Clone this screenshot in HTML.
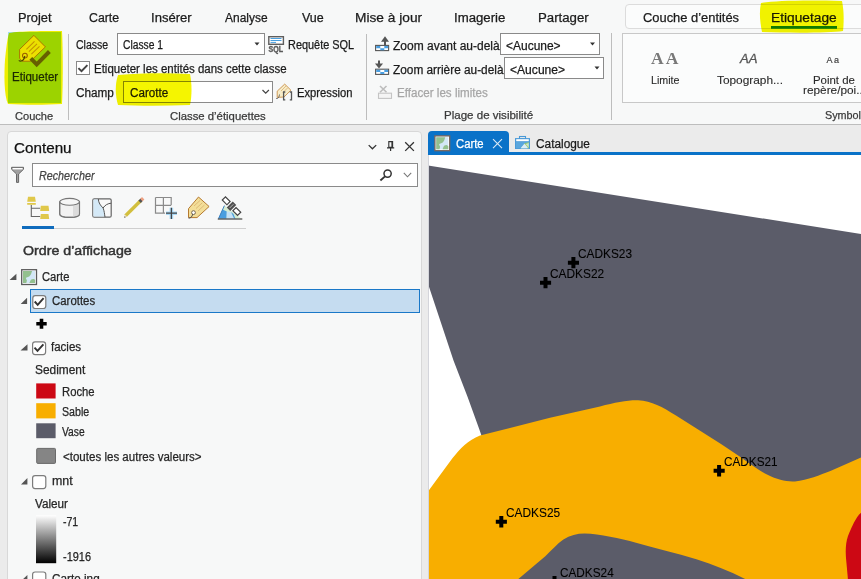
<!DOCTYPE html>
<html><head><meta charset="utf-8">
<style>
html,body{margin:0;padding:0}
body{width:861px;height:579px;overflow:hidden;position:relative;background:#ebebeb;font-family:"Liberation Sans",sans-serif}
.a{position:absolute;box-sizing:border-box}
.t{position:absolute;white-space:nowrap;line-height:1;transform-origin:0 0;-webkit-text-stroke:0.25px currentColor}
svg{position:absolute;overflow:visible}
</style></head><body>
<!-- ribbon -->
<div class="a" style="left:0;top:0;width:861px;height:124px;background:#f7f8f8"></div>
<div class="a" style="left:0;top:124px;width:861px;height:1px;background:#bdbdbd"></div>
<!-- contextual tab box -->
<div class="a" style="left:625px;top:4px;width:260px;height:25px;background:#fbfcfc;border:1px solid #dcdcdc;border-radius:4px"></div>
<!-- separators -->
<div class="a" style="left:68px;top:34px;width:1px;height:86px;background:#bdbdbd"></div>
<div class="a" style="left:366px;top:34px;width:1px;height:86px;background:#bdbdbd"></div>
<div class="a" style="left:611px;top:33px;width:1px;height:87px;background:#bdbdbd"></div>
<!-- combos -->
<div class="a" style="left:117px;top:33px;width:148px;height:22px;background:#fff;border:1px solid #8a8a8a"></div>
<div class="a" style="left:76px;top:61px;width:14px;height:14px;background:#fff;border:1px solid #8a8a8a"></div>
<div class="a" style="left:123px;top:81px;width:150px;height:22px;border:1px solid #8a8a8a;background:#fff"></div>
<div class="a" style="left:500px;top:33px;width:100px;height:22px;background:#fff;border:1px solid #8a8a8a"></div>
<div class="a" style="left:504px;top:57px;width:100px;height:22px;background:#fff;border:1px solid #8a8a8a"></div>
<!-- gallery -->
<div class="a" style="left:622px;top:33px;width:260px;height:70px;background:#fbfcfc;border:1px solid #c8c8c8"></div>

<!-- ribbon svg layer -->
<svg style="left:0;top:0" width="861" height="125" viewBox="0 0 861 125">
 <!-- highlighter Etiquetage -->
 <rect x="771" y="26" width="66" height="2.8" fill="#1080d0"/>
 <!-- Etiqueter button -->
 <rect x="8" y="32" width="53" height="71" fill="#a2dcf4"/>
 <path d="M33.9 35.4 L45.4 46.9 L30.5 61.2 L22.1 61.2 L19.6 58.3 L19.6 49.4 Z" fill="#f5ea00" stroke="#b07000" stroke-width="0.9" stroke-linejoin="round"/>
 <path d="M26.4 49.4 L34.5 41.3 M28.9 51.6 L37 43.8 M31.4 54.1 L39.5 46.3" stroke="#cc9a00" stroke-width="1.1"/>
 <circle cx="24.9" cy="55.6" r="2.4" fill="#f5ea00" stroke="#a06000" stroke-width="1.1"/>
 <path d="M24.9 56 C24.3 58.5 23.5 60.2 22 60.8 C20.8 61.3 19.6 61.2 18.8 60.3" fill="none" stroke="#4a4a10" stroke-width="1.1"/>
 <path d="M30.8 58.4 L36.7 64.3 L49.4 51.5" fill="none" stroke="#6b6400" stroke-width="4"/>
 <!-- combo arrows -->
 <path d="M254.5 42.5 L259.5 42.5 L257 45.5 Z M590 42.5 L595 42.5 L592.5 45.5 Z M594.5 66.5 L599.5 66.5 L597 69.5 Z" fill="#333"/>
 <path d="M262.5 90 L265.7 93.2 L268.9 90" fill="none" stroke="#444" stroke-width="1.2"/>
 <!-- checkbox check -->
 <path d="M78.4 68.1 L81.5 71.1 L87.4 65.1" fill="none" stroke="#444" stroke-width="2"/>
 <!-- SQL icon -->
 <rect x="268.8" y="36.7" width="14.6" height="7.6" fill="#fff" stroke="#5e5e5e" stroke-width="1.4"/>
 <path d="M270.5 38.5 H281.5 M270.5 40.5 H281.5 M270.5 42.4 H276" stroke="#4aa0e0" stroke-width="1"/>
 <text x="268.6" y="51.8" font-family="Liberation Sans" font-weight="bold" font-size="8.4" fill="#5a5a5a" stroke="#5a5a5a" stroke-width="0.35" textLength="14.6" lengthAdjust="spacingAndGlyphs">SQL</text>
 <!-- expression icon -->
 <path d="M284.7 84.1 L290.9 90.2 L284 97 L277.2 97.4 L277.2 91.2 Z" fill="#f7ecc8" stroke="#c8904a" stroke-width="0.9"/>
 <path d="M281 91 L286 86 M282.5 93 L287.5 88" stroke="#d8b070" stroke-width="0.8"/>
 <path d="M285.3 92 H283.6 V99.8 H285.3 M289.8 92 H291.5 V99.8 H289.8" fill="none" stroke="#555" stroke-width="1.3"/>
 <path d="M279.5 94.5 C279 98 277.5 99 276 98.3" fill="none" stroke="#555" stroke-width="0.9"/>
 <!-- zoom in icon -->
 <rect x="375.6" y="45.4" width="13" height="5.2" fill="#fff" stroke="#555" stroke-width="1.1"/>
 <path d="M376.2 46 h4.1 v2.2 h-4.1 Z M384.3 46 h3.8 v2.2 h-3.8 Z M380.3 48.2 h4 v2.1 h-4 Z" fill="#4a9ee0"/>
 <path d="M385 45.2 V40" stroke="#555" stroke-width="2"/>
 <path d="M381 41.8 L385 36.3 L389 41.8 Z" fill="#555"/>
 <!-- zoom out icon -->
 <rect x="375.6" y="69.2" width="13" height="5.2" fill="#fff" stroke="#555" stroke-width="1.1"/>
 <path d="M376.2 69.8 h4.1 v2.2 h-4.1 Z M384.3 69.8 h3.8 v2.2 h-3.8 Z M380.3 72 h4 v2.1 h-4 Z" fill="#4a9ee0"/>
 <path d="M379 60.4 V65" stroke="#555" stroke-width="2"/>
 <path d="M375 63.6 L379 68.6 L383 63.6 Z" fill="#555"/>
 <!-- effacer icon -->
 <rect x="378.5" y="93.2" width="13" height="5.2" fill="#f4f4f4" stroke="#c4c4c4" stroke-width="1.1"/>
 <path d="M380 86 L386.5 92.3 M386.5 86 L380 92.3" stroke="#bdbdbd" stroke-width="1.6"/>
 <!-- gallery glyphs -->
 <text x="651" y="63.8" font-family="Liberation Serif" font-weight="bold" font-size="17.5" fill="#787878" textLength="27.5" lengthAdjust="spacing">AA</text>
 <text x="740" y="63.4" font-family="Liberation Sans" font-style="italic" font-size="12.2" fill="#555" stroke="#555" stroke-width="0.3" textLength="17.5" lengthAdjust="spacingAndGlyphs">AA</text>
 <text x="826.6" y="63.2" font-family="Liberation Sans" font-size="9" fill="#444" stroke="#444" stroke-width="0.2" textLength="12.5" lengthAdjust="spacing">Aa</text>
</svg>

<!-- contents panel -->
<div class="a" style="left:7px;top:131px;width:415px;height:460px;background:#f7f8f8;border:1px solid #d8d8d8;border-radius:4px"></div>
<div class="a" style="left:32px;top:163px;width:386px;height:24px;background:#fff;border:1px solid #8a8a8a"></div>
<div class="a" style="left:22px;top:226px;width:32px;height:3px;background:#0f6cbd"></div>
<div class="a" style="left:54px;top:228px;width:192px;height:1px;background:#cfcfcf"></div>
<!-- selection -->
<div class="a" style="left:30px;top:289px;width:390px;height:24px;background:#c5dcf0;border:1px solid #1a78c8"></div>

<svg style="left:0;top:125px" width="428" height="454" viewBox="0 125 428 454">
 <!-- header icons -->
 <path d="M368.7 145.1 L372.4 148.8 L376.2 145.1" fill="none" stroke="#333" stroke-width="1.3"/>
 <path d="M388.8 141.6 H392.6 V147.4 H388.8 Z" fill="none" stroke="#333" stroke-width="1.1"/>
 <rect x="391.4" y="141.6" width="1.6" height="5.8" fill="#333"/>
 <path d="M387 147.8 H394.2 M390.6 147.8 V151" stroke="#333" stroke-width="1.2"/>
 <path d="M405.2 142.2 L413.9 150.9 M413.9 142.2 L405.2 150.9" stroke="#333" stroke-width="1.3"/>
 <!-- filter -->
 <path d="M11.6 167.3 H23.5 V169.3 L18.6 174 V182.4 H16.5 V174 L11.6 169.3 Z" fill="#a0a0a0" stroke="#666" stroke-width="1"/>
 <rect x="12.6" y="168" width="10" height="1.4" fill="#fff"/>
 <!-- search -->
 <circle cx="387.6" cy="173.6" r="3.6" fill="none" stroke="#333" stroke-width="1.5"/>
 <path d="M385 176.3 L380.4 180.5" stroke="#333" stroke-width="1.8"/>
 <path d="M403.8 172.8 L407.5 176.8 L411.2 172.8" fill="none" stroke="#777" stroke-width="1.1"/>
 <!-- tab icon 1 drawing order -->
 <path d="M28 196.8 H35 L35.8 201.7 H27.2 Z M27.2 203 H35.8 V204.8 H27.2 Z" fill="#e0c84a"/>
 <path d="M31.3 205 V216.5 H40.2 M31.3 208.2 H40.2" fill="none" stroke="#666" stroke-width="1.1"/>
 <path d="M40.8 205.8 H48.5 L49.2 211 H40.2 Z M40.8 214 H48.5 L49.2 218.9 H40.2 Z" fill="#e0c84a"/>
 <!-- tab icon 2 cylinder -->
 <path d="M59.7 201.5 V214 C59.7 218.5 79.5 218.5 79.5 214 V201.5" fill="#f2f2f2" stroke="#777" stroke-width="1.1"/>
 <path d="M73 206 V217 C76 216.5 79.5 215.5 79.5 214 V202 C78 204 76 205.5 73 206 Z" fill="#dcdcdc"/>
 <ellipse cx="69.6" cy="201.8" rx="9.9" ry="3.4" fill="#f6f6f6" stroke="#777" stroke-width="1.1"/>
 <path d="M59.7 201.5 V214 C59.7 218.5 79.5 218.5 79.5 214 V201.5" fill="none" stroke="#777" stroke-width="1.1"/>
 <!-- tab icon 3 -->
 <rect x="92.8" y="198.8" width="18.4" height="18.4" rx="1.5" fill="#f8f8f8" stroke="#666" stroke-width="1.2"/>
 <path d="M93.4 199.4 H98.3 C98.6 203 100.5 205.5 103.1 208 C104.3 211 104.5 214 105 216.6 H93.4 Z" fill="#d4e9f7"/>
 <path d="M98.3 199 C98.6 203 100.5 205.5 103.1 208 C104.3 211 104.5 214 105 217.2 M103.1 208 C105 205 108 203.4 111.2 203.2" fill="none" stroke="#555" stroke-width="1"/>
 <!-- pencil -->
 <path d="M125.5 215.8 L140.6 200.8" stroke="#d2bf3e" stroke-width="3.4"/>
 <path d="M139.6 201.8 L141.8 199.6" stroke="#555" stroke-width="3.4"/>
 <path d="M141.4 199.9 L143.2 198.2" stroke="#eda081" stroke-width="3.4"/>
 <path d="M124.2 217.8 L125 214.4 L127.1 216.6 Z" fill="#e8d8b0"/>
 <path d="M124.2 217.8 L124.6 216.3 L125.8 217.3 Z" fill="#444"/>
 <!-- grid+ -->
 <path d="M155.5 197.5 H171.2 V205 M155.5 197.5 V213.2 H165 M163.4 197.5 V213 M155.5 205.4 H171.2" fill="none" stroke="#8a8a8a" stroke-width="1.2"/>
 <path d="M166 213.2 H177 M171.4 207.8 V219" stroke="#a8daf8" stroke-width="3.6"/>
 <path d="M166 213.2 H177 M171.4 207.8 V219" stroke="#444" stroke-width="1.3"/>
 <!-- tag -->
 <path d="M198.5 197 L209.1 206.5 L197 217.6 L188.5 217.6 L188.5 208.7 Z" fill="#f3de98" stroke="#b57a30" stroke-width="1"/>
 <path d="M194 206 L200 200.5 M196 208.5 L202.3 202.8 M198 211 L204.5 205" stroke="#d8b070" stroke-width="0.8"/>
 <circle cx="193.5" cy="212.6" r="1.9" fill="#fff" stroke="#7a6a50" stroke-width="1"/>
 <path d="M192.8 214 C192 217 190.5 218.5 188.5 218" fill="none" stroke="#555" stroke-width="1"/>
 <!-- satellite -->
 <path d="M218.3 219.1 L224.4 205.6 L241.8 219.1 Z" fill="#d6ecd2"/>
 <path d="M218.3 219.1 L222.6 209.5 L226.8 211.5 L226.6 219.1 Z" fill="#4a9ee0"/>
 <path d="M226.6 219.1 L226.8 211.5 L231 212 L234.3 219.1 Z" fill="#c6e2f6"/>
 <path d="M231 212 L233.5 214 L235.5 219.1 L234.3 219.1 Z" fill="#4a9ee0"/>
 <path d="M218.3 219.1 L224.4 205.6" stroke="#3a7fc0" stroke-width="1"/>
 <path d="M217.8 219 H242.3" stroke="#666" stroke-width="1.5"/>
 <g transform="rotate(45 231.5 206.15)">
  <rect x="229" y="201.9" width="5" height="8.5" fill="#505050"/>
  <path d="M231.5 203.5 V208.8" stroke="#ddd" stroke-width="0.7"/>
  <rect x="220.7" y="203.9" width="6.6" height="4.5" fill="#fff" stroke="#444" stroke-width="1.2"/>
  <rect x="235.7" y="203.9" width="6.6" height="4.5" fill="#fff" stroke="#444" stroke-width="1.2"/>
 </g>
 <!-- tree triangles -->
 <path d="M9.6 280 L16.4 280 L16.4 273.8 Z M20.7 304 L27.1 304 L27.1 297.8 Z M20.5 350.5 L27.5 350.5 L27.5 344.3 Z M21 484.4 L27.4 484.4 L27.4 478 Z M21 581 L27.4 581 L27.4 575 Z" fill="#555"/>
 <!-- map icon -->
 <rect x="21.7" y="269.7" width="14.8" height="14.8" fill="#fff" stroke="#5a5a5a" stroke-width="1.3"/>
 <rect x="23" y="271" width="12.1" height="12.1" fill="#d3e7f6"/>
 <path d="M23 271 H32.1 C31.5 272.5 31.2 274 30.5 275 C29.8 276.3 28.6 276.8 28 277 C27 277.3 26 277.6 25.9 278.2 C26.2 279.2 27 280 26.9 280.8 C26.7 281.7 26.3 282.4 26.3 283.1 H23 Z" fill="#93c08e"/>
 <path d="M29.4 283.1 C30 281.5 30.5 280 31.3 279.4 C32 279 33 278.8 33.7 279 C34.4 279.3 35.1 279.8 35.1 280.1 V283.1 Z" fill="#93c08e"/>
 <!-- checkboxes -->
 <rect x="32.8" y="295.7" width="13" height="12.8" rx="2.5" fill="#fff" stroke="#7c7c7c" stroke-width="1.2"/>
 <path d="M34.7 301.5 L37.7 304.8 L43.6 298.2" fill="none" stroke="#333" stroke-width="1.9"/>
 <rect x="32.6" y="341.8" width="13" height="12.8" rx="2.5" fill="#fff" stroke="#7c7c7c" stroke-width="1.2"/>
 <path d="M34.5 347.6 L37.5 350.9 L43.4 344.3" fill="none" stroke="#333" stroke-width="1.9"/>
 <rect x="32.6" y="475.6" width="13.2" height="13" rx="2.5" fill="#fff" stroke="#7c7c7c" stroke-width="1.2"/>
 <rect x="32.6" y="572" width="13.2" height="13" rx="2.5" fill="#fff" stroke="#7c7c7c" stroke-width="1.2"/>
 <!-- plus -->
 <path d="M36.3 322 h3.4 v-3.2 h3.6 v3.2 h3.4 v3.5 h-3.4 v3.2 h-3.6 v-3.2 h-3.4 Z" fill="#000"/>
 <!-- swatches -->
 <rect x="36.2" y="383.4" width="19.4" height="15.1" fill="#cc0814"/>
 <rect x="36.2" y="403.2" width="19.4" height="15.2" fill="#f8ae00"/>
 <rect x="36.2" y="423.3" width="19.4" height="14.9" fill="#5b5c69"/>
 <rect x="36.7" y="448.4" width="18.8" height="15" rx="1" fill="#858585" stroke="#6a6a6a" stroke-width="1"/>
 <defs><linearGradient id="g1" x1="0" y1="0" x2="0" y2="1"><stop offset="0" stop-color="#fff"/><stop offset="1" stop-color="#000"/></linearGradient></defs>
 <rect x="36" y="515.2" width="20.2" height="48" fill="url(#g1)"/>
</svg>

<!-- map area -->
<div class="a" style="left:428px;top:131px;width:81px;height:24px;background:#0a72c8;border-radius:4px 4px 0 0"></div>
<div class="a" style="left:428px;top:152px;width:433px;height:3px;background:#0a72c8"></div>
<div class="a" style="left:428px;top:155px;width:433px;height:424px;background:#fff"></div>
<svg style="left:428px;top:131px" width="433" height="448" viewBox="428 131 433 448">
 <!-- tab icons -->
 <g transform="translate(413.2 -133.8)"><rect x="21.7" y="269.7" width="14.8" height="14.8" fill="#fff" stroke="#76655c" stroke-width="1.3"/>
 <rect x="23" y="271" width="12.1" height="12.1" fill="#d3e7f6"/>
 <path d="M23 271 H32.1 C31.5 272.5 31.2 274 30.5 275 C29.8 276.3 28.6 276.8 28 277 C27 277.3 26 277.6 25.9 278.2 C26.2 279.2 27 280 26.9 280.8 C26.7 281.7 26.3 282.4 26.3 283.1 H23 Z" fill="#93c08e"/>
 <path d="M29.4 283.1 C30 281.5 30.5 280 31.3 279.4 C32 279 33 278.8 33.7 279 C34.4 279.3 35.1 279.8 35.1 280.1 V283.1 Z" fill="#93c08e"/></g>
 <path d="M493 139.2 L502 148.2 M502 139.2 L493 148.2" stroke="#dbe9f6" stroke-width="1.1"/>
 <rect x="519.5" y="136.5" width="6" height="2.5" fill="none" stroke="#4a9ad8" stroke-width="1.1"/>
 <rect x="515" y="138.1" width="15" height="10.9" fill="#4a9ad8"/>
 <rect x="516.2" y="139.2" width="12.6" height="2" fill="#fff"/>
 <rect x="516" y="142" width="13" height="6.2" fill="#5aa6dd"/>
 <path d="M520.7 148.2 L524.5 143.8 L528.8 142.6 L528.8 148.2 Z" fill="#d0e8c0"/>
 <path d="M524.5 143.8 C526 144.5 527.5 146 528.8 148.2 M524.5 143.8 L528.8 142.6" fill="none" stroke="#8cc070" stroke-width="0.9"/>
 <path d="M520.7 148.2 L524.5 143.8 L527.5 148.2 Z" fill="#dcecf8"/>
</svg>
<svg style="left:428px;top:155px" width="433" height="424" viewBox="428 155 433 424">
<path d="M428 165.5 L861 234 L861 600 L483 600 L483 440 L479.2 429 L467.8 397.6 L453.5 360.5 L439.3 317.8 L428.4 285 Z" fill="#5b5c69"/>
<path d="M428 491.5 L452.6 458 C460 449 468 440 480 435.5 L550 417.8 L600 406.5 C615 402.5 628 400 638 400.3 C652 401 662 407 676 415.5 L721 444 C740 456 753 467 767 474.6 C778 480 786 482 795 481.5 C808 480 820 475 830.4 471 L861 457.5 L861 600 L428 600 Z" fill="#f8ae00"/>
<path d="M516 581 L545.3 556.3 C552 550 557 544 563.4 539.6 C570 535.5 577 533.6 584.6 533.6 C600 534 620 538.5 636 542.7 C655 548 676 553 696.4 559.3 C715 565.5 732 572 749 581 Z" fill="#5b5c69"/>
<path d="M861 512.7 C856 517 852 526 848 536 C845.5 543 845.5 551 846 558 L848 580 L861 580 Z" fill="#cc0814"/>
<g fill="#000">
 <path d="M567.9 260.7 h3.5 v-3.7 h4 v3.7 h3.6 v4 h-3.6 v3.6 h-4 v-3.6 h-3.5 Z"/>
 <path d="M540 280.7 h3.5 v-3.7 h4 v3.7 h3.6 v4 h-3.6 v3.6 h-4 v-3.6 h-3.5 Z"/>
 <path d="M713.6 468.8 h3.5 v-3.7 h4 v3.7 h3.6 v4 h-3.6 v3.6 h-4 v-3.6 h-3.5 Z"/>
 <path d="M495.8 519.8 h3.5 v-3.7 h4 v3.7 h3.6 v4 h-3.6 v3.6 h-4 v-3.6 h-3.5 Z"/>
 <path d="M549 579.7 h3.5 v-3.7 h4 v3.7 h3.6 v4 h-3.6 v3.6 h-4 v-3.6 h-3.5 Z"/>
</g>
</svg>
<div class="a" style="left:428px;top:155px;width:1px;height:424px;background:#d4d5db"></div>
<div class="t" style="left:17.67px;top:12.00px;font-size:12.5px;color:#1b1b1b;transform:scaleX(1.0286);">Projet</div>
<div class="t" style="left:88.50px;top:12.00px;font-size:12.5px;color:#1b1b1b;transform:scaleX(0.9865);">Carte</div>
<div class="t" style="left:150.95px;top:12.00px;font-size:12.5px;color:#1b1b1b;transform:scaleX(1.0466);">Insérer</div>
<div class="t" style="left:225.40px;top:12.00px;font-size:12.5px;color:#1b1b1b;transform:scaleX(0.9569);">Analyse</div>
<div class="t" style="left:301.80px;top:12.00px;font-size:12.5px;color:#1b1b1b;transform:scaleX(0.9988);">Vue</div>
<div class="t" style="left:355.10px;top:12.00px;font-size:12.5px;color:#1b1b1b;transform:scaleX(1.0972);">Mise à jour</div>
<div class="t" style="left:454.14px;top:12.00px;font-size:12.5px;color:#1b1b1b;transform:scaleX(1.0570);">Imagerie</div>
<div class="t" style="left:538.14px;top:12.00px;font-size:12.5px;color:#1b1b1b;transform:scaleX(1.0581);">Partager</div>
<div class="t" style="left:643.00px;top:12.00px;font-size:12.5px;color:#1b1b1b;transform:scaleX(1.0316);">Couche d’entités</div>
<div class="t" style="left:771.30px;top:12.00px;font-size:12.5px;color:#1b1b1b;transform:scaleX(1.0983);">Etiquetage</div>
<div class="t" style="left:76.30px;top:39.20px;font-size:12px;color:#1b1b1b;transform:scaleX(0.8782);">Classe</div>
<div class="t" style="left:123.40px;top:39.20px;font-size:12px;color:#1b1b1b;transform:scaleX(0.8572);">Classe 1</div>
<div class="t" style="left:288.00px;top:39.00px;font-size:12px;color:#1b1b1b;transform:scaleX(0.9091);">Requête SQL</div>
<div class="t" style="left:94.10px;top:63.00px;font-size:12px;color:#1b1b1b;transform:scaleX(0.9560);">Etiqueter les entités dans cette classe</div>
<div class="t" style="left:76.30px;top:86.70px;font-size:12px;color:#1b1b1b;transform:scaleX(0.9792);">Champ</div>
<div class="t" style="left:129.60px;top:86.70px;font-size:12px;color:#1b1b1b;transform:scaleX(0.9703);">Carotte</div>
<div class="t" style="left:296.60px;top:87.00px;font-size:12px;color:#1b1b1b;transform:scaleX(0.9355);">Expression</div>
<div class="t" style="left:170.00px;top:110.50px;font-size:11.5px;color:#3a3a3a;transform:scaleX(0.9855);">Classe d’étiquettes</div>
<div class="t" style="left:14.50px;top:110.90px;font-size:11.5px;color:#3a3a3a;transform:scaleX(0.9632);">Couche</div>
<div class="t" style="left:11.75px;top:71.20px;font-size:12px;color:#1d2a00;transform:scaleX(0.9608);">Etiqueter</div>
<div class="t" style="left:393.00px;top:39.80px;font-size:12px;color:#1b1b1b;transform:scaleX(0.9995);">Zoom avant au-delà</div>
<div class="t" style="left:393.00px;top:63.60px;font-size:12px;color:#1b1b1b;transform:scaleX(0.9860);">Zoom arrière au-delà</div>
<div class="t" style="left:506.40px;top:39.80px;font-size:12px;color:#1b1b1b;transform:scaleX(0.9980);">&lt;Aucune&gt;</div>
<div class="t" style="left:510.20px;top:63.60px;font-size:12px;color:#1b1b1b;transform:scaleX(1.0072);">&lt;Aucune&gt;</div>
<div class="t" style="left:397.00px;top:87.00px;font-size:12px;color:#a6a6a6;transform:scaleX(0.9679);">Effacer les limites</div>
<div class="t" style="left:444.00px;top:109.60px;font-size:11.5px;color:#3a3a3a;transform:scaleX(1.0038);">Plage de visibilité</div>
<div class="t" style="left:650.50px;top:74.50px;font-size:10.5px;color:#2a2a2a;transform:scaleX(1.0189);-webkit-text-stroke:0.1px #2a2a2a">Limite</div>
<div class="t" style="left:716.70px;top:75.00px;font-size:10.5px;color:#2a2a2a;transform:scaleX(1.1295);-webkit-text-stroke:0.1px #2a2a2a">Topograph...</div>
<div class="t" style="left:812.60px;top:75.00px;font-size:10.5px;color:#2a2a2a;transform:scaleX(1.0882);-webkit-text-stroke:0.1px #2a2a2a">Point de</div>
<div class="t" style="left:802.60px;top:85.10px;font-size:10.5px;color:#2a2a2a;transform:scaleX(1.1249);-webkit-text-stroke:0.1px #2a2a2a">repère/poi...</div>
<div class="t" style="left:825.00px;top:110.00px;font-size:11.5px;color:#3a3a3a;transform:scaleX(0.9394);">Symbol</div>
<div class="t" style="left:13.70px;top:141.00px;font-size:14.5px;color:#111;transform:scaleX(1.0501);">Contenu</div>
<div class="t" style="left:38.60px;top:169.70px;font-size:12px;color:#444;transform:scaleX(0.8948);font-style:italic">Rechercher</div>
<div class="t" style="left:22.50px;top:243.90px;font-size:13px;color:#333;transform:scaleX(1.0931);-webkit-text-stroke:0.45px #333">Ordre d’affichage</div>
<div class="t" style="left:42.30px;top:270.80px;font-size:12px;color:#262626;transform:scaleX(0.9336);">Carte</div>
<div class="t" style="left:51.50px;top:295.00px;font-size:12px;color:#262626;transform:scaleX(0.9504);">Carottes</div>
<div class="t" style="left:50.90px;top:340.90px;font-size:12px;color:#262626;transform:scaleX(0.9602);">facies</div>
<div class="t" style="left:35.00px;top:363.50px;font-size:12px;color:#262626;transform:scaleX(0.9910);">Sediment</div>
<div class="t" style="left:62.30px;top:385.70px;font-size:12px;color:#262626;transform:scaleX(0.9396);">Roche</div>
<div class="t" style="left:62.30px;top:405.50px;font-size:12px;color:#262626;transform:scaleX(0.8866);">Sable</div>
<div class="t" style="left:62.30px;top:425.80px;font-size:12px;color:#262626;transform:scaleX(0.8549);">Vase</div>
<div class="t" style="left:62.70px;top:451.00px;font-size:12px;color:#262626;transform:scaleX(0.9620);">&lt;toutes les autres valeurs&gt;</div>
<div class="t" style="left:51.60px;top:475.30px;font-size:12px;color:#262626;transform:scaleX(1.0353);">mnt</div>
<div class="t" style="left:35.00px;top:498.30px;font-size:12px;color:#262626;transform:scaleX(0.9763);">Valeur</div>
<div class="t" style="left:62.70px;top:516.00px;font-size:12px;color:#262626;transform:scaleX(0.8772);">-71</div>
<div class="t" style="left:62.70px;top:550.80px;font-size:12px;color:#262626;transform:scaleX(0.9124);">-1916</div>
<div class="t" style="left:51.60px;top:573.00px;font-size:12px;color:#262626;transform:scaleX(0.9788);">Carte ing</div>
<div class="t" style="left:455.50px;top:137.80px;font-size:12.5px;color:#fff;transform:scaleX(0.9048);">Carte</div>
<div class="t" style="left:536.00px;top:137.80px;font-size:12.5px;color:#1b1b1b;transform:scaleX(0.9468);">Catalogue</div>
<div class="t" style="left:577.90px;top:247.70px;font-size:12px;color:#000;transform:scaleX(0.9870);-webkit-text-stroke:0.1px #000">CADKS23</div>
<div class="t" style="left:550.40px;top:268.00px;font-size:12px;color:#000;transform:scaleX(0.9888);-webkit-text-stroke:0.1px #000">CADKS22</div>
<div class="t" style="left:724.30px;top:455.50px;font-size:12px;color:#000;transform:scaleX(0.9797);-webkit-text-stroke:0.1px #000">CADKS21</div>
<div class="t" style="left:506.00px;top:506.60px;font-size:12px;color:#000;transform:scaleX(0.9888);-webkit-text-stroke:0.1px #000">CADKS25</div>
<div class="t" style="left:559.50px;top:566.50px;font-size:12px;color:#000;transform:scaleX(0.9815);-webkit-text-stroke:0.1px #000">CADKS24</div>
<svg style="left:0;top:0;mix-blend-mode:multiply" width="861" height="125" viewBox="0 0 861 125">
 <path d="M761 3 C775 1 800 0 842 1 C844 10 844 22 843 31 C830 33 790 33 762 32 C760 22 759 12 761 3 Z" fill="#f5f500"/>
 <path d="M9 33 C20 31 45 31 62 31 C63 50 63 85 62 104 C45 105 25 105 8 104 C4 95 4 75 5 60 C6 50 7 40 9 33 Z" fill="#f5f500"/>
 <path d="M118 75 C140 73 170 73 190 74 C192 84 192 96 190 105 C165 106 140 106 118 105 C115 95 115 84 118 75 Z" fill="#f5f500"/>
</svg>

</body></html>
